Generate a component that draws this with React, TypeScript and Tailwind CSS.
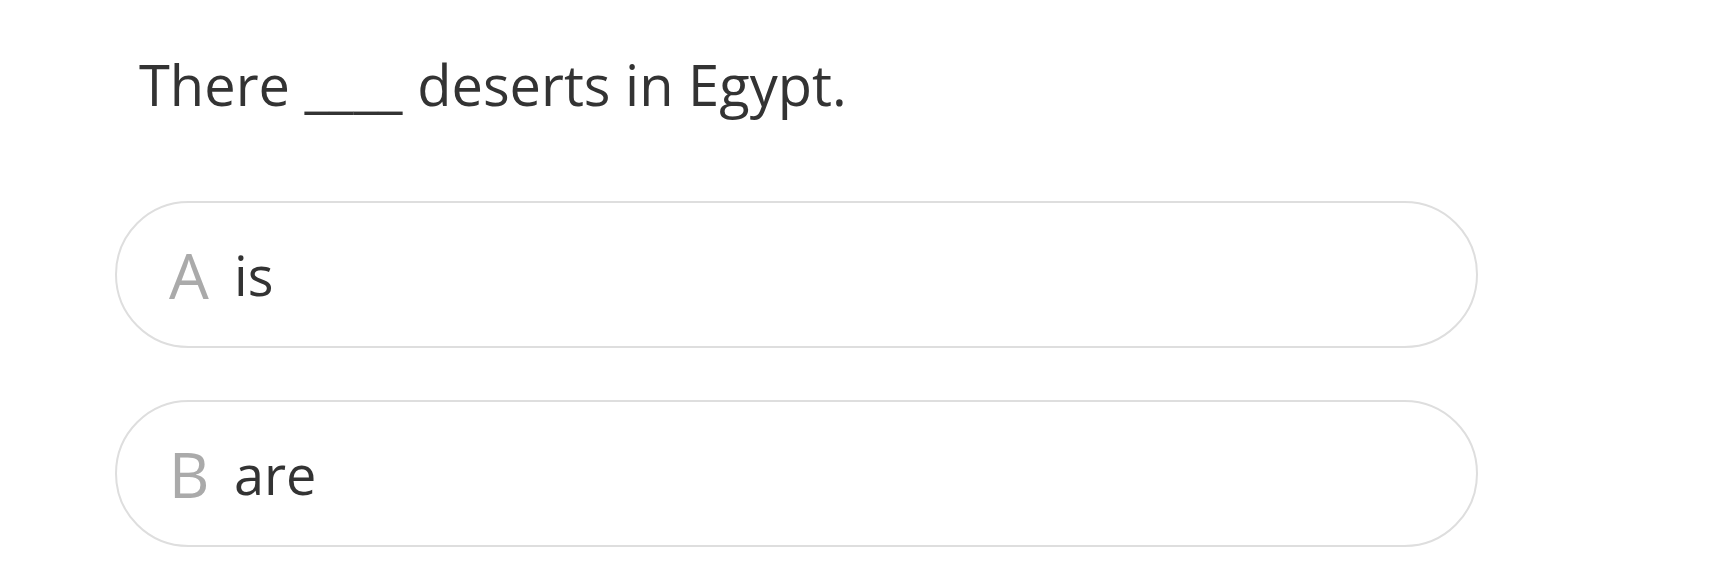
const options = [
  { key: "A", text: "is" },
  { key: "B", text: "are" },
];

function App() {
  return (
    <div
      className="min-h-screen bg-white pl-[115px] pt-[46px]"
      style={{ fontFamily: '"Open Sans", "Noto Sans", sans-serif' }}
    >
      <p className="pl-[24px] text-[56px] leading-[76px] text-[#333333]">
        There ____ deserts in Egypt.
      </p>
      <div className="mt-[79px] flex w-[1363px] flex-col gap-[52px]">
        {options.map((opt) => (
          <div
            key={opt.key}
            className="flex h-[147px] items-center rounded-full border-2 border-[#dedede] pl-[40px]"
          >
            <span className="w-[64px] text-center text-[63px] leading-none text-[#aaaaaa]">
              {opt.key}
            </span>
            <span className="ml-[13px] text-[54px] leading-none text-[#333333]">
              {opt.text}
            </span>
          </div>
        ))}
      </div>
    </div>
  );
}

export default App;
